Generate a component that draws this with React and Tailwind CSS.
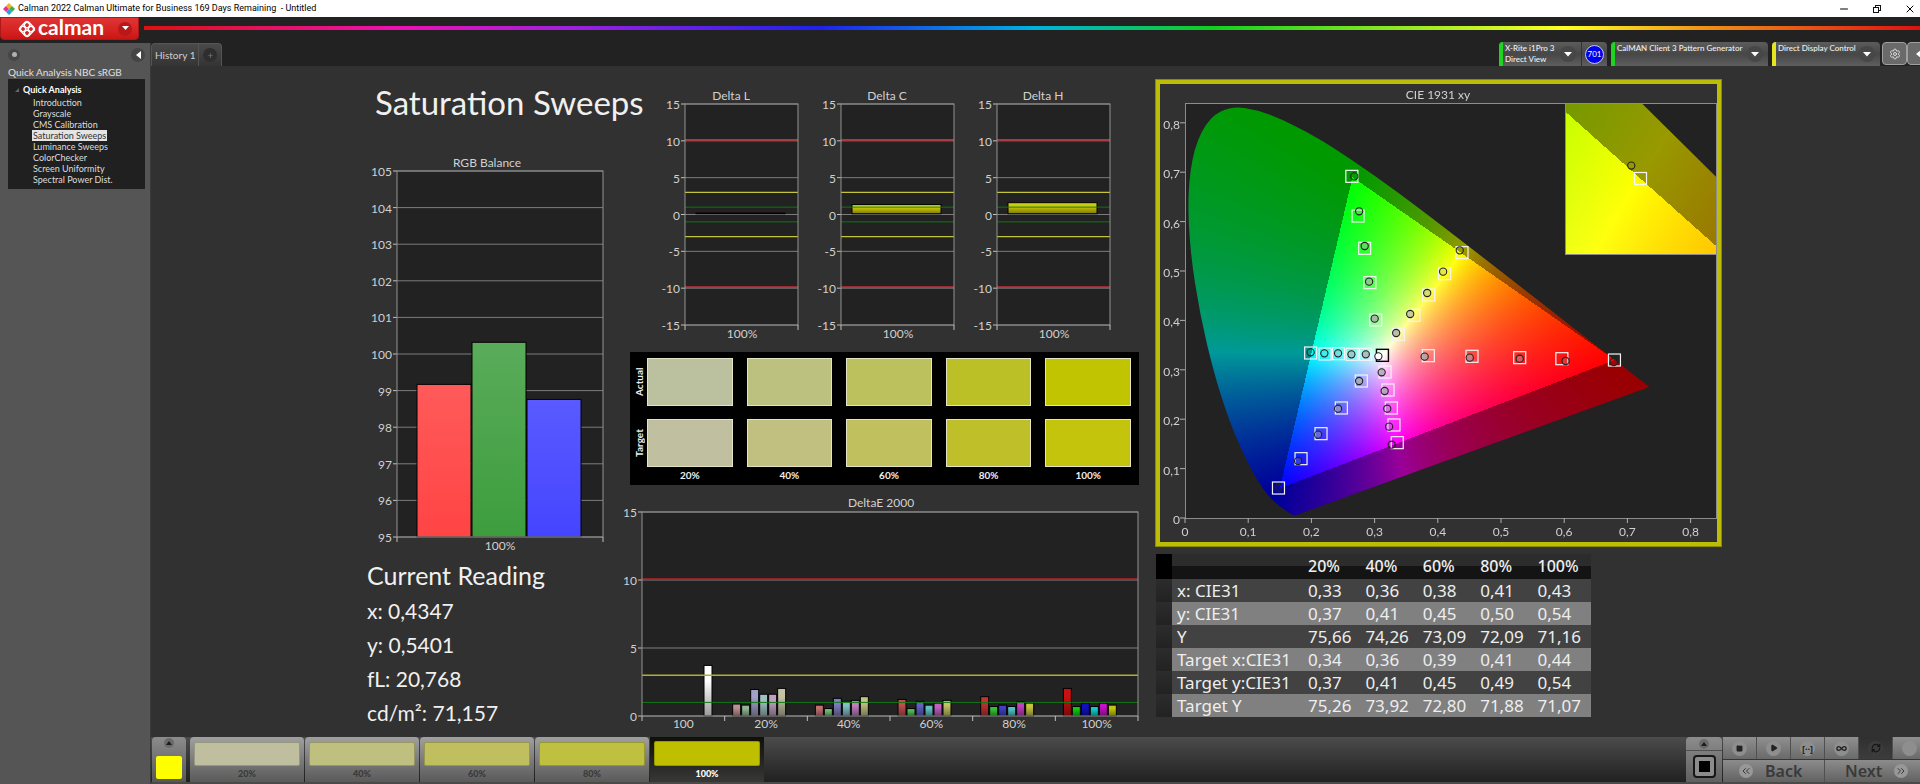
import React, { useEffect, useRef } from 'react';
import { Minus, Copy, X, Settings, Square, Play, RefreshCw, Infinity as InfinityIcon, ChevronsLeft, ChevronsRight } from 'lucide-react';

const steps = [
  { label: '20%', actual: 'bg-[#bbc19f]', target: 'bg-[#c0bf9f]', patch: 'bg-[#bfbf9f]' },
  { label: '40%', actual: 'bg-[#bcc180]', target: 'bg-[#c1c080]', patch: 'bg-[#bfbf80]' },
  { label: '60%', actual: 'bg-[#bdc15d]', target: 'bg-[#c1c05e]', patch: 'bg-[#bfbf60]' },
  { label: '80%', actual: 'bg-[#bcc027]', target: 'bg-[#bfbf29]', patch: 'bg-[#bfbf40]' },
  { label: '100%', actual: 'bg-[#c1c400]', target: 'bg-[#c4c40c]', patch: 'bg-[#bfbf00]' },
];

const workflow = [
  'Introduction',
  'Grayscale',
  'CMS Calibration',
  'Saturation Sweeps',
  'Luminance Sweeps',
  'ColorChecker',
  'Screen Uniformity',
  'Spectral Power Dist.',
];

const tableRows = [
  ['x: CIE31', '0,33', '0,36', '0,38', '0,41', '0,43'],
  ['y: CIE31', '0,37', '0,41', '0,45', '0,50', '0,54'],
  ['Y', '75,66', '74,26', '73,09', '72,09', '71,16'],
  ['Target x:CIE31', '0,34', '0,36', '0,39', '0,41', '0,44'],
  ['Target y:CIE31', '0,37', '0,41', '0,45', '0,49', '0,54'],
  ['Target Y', '75,26', '73,92', '72,80', '71,88', '71,07'],
];

const deltaE = [
  { label: '100', bars: [[6, 3.72, '#ffffff']] },
  { label: '20%', bars: [[0, 0.88, '#c09090'], [1, 0.8, '#90b890'], [2, 1.95, '#a0a0c8'], [3, 1.6, '#a0c0c0'], [4, 1.6, '#c0a0c0'], [5, 2.03, '#c4c4a4']] },
  { label: '40%', bars: [[0, 0.8, '#c07070'], [1, 0.55, '#70b870'], [2, 1.3, '#8080c0'], [3, 1.08, '#80c0c0'], [4, 1.15, '#c080c0'], [5, 1.42, '#c4c484']] },
  { label: '60%', bars: [[0, 1.22, '#c05050'], [1, 0.55, '#50b850'], [2, 1.08, '#6060c0'], [3, 0.8, '#60c0c0'], [4, 0.95, '#c060c0'], [5, 1.15, '#c4c464']] },
  { label: '80%', bars: [[0, 1.42, '#c03434'], [1, 0.7, '#34c034'], [2, 0.8, '#4040c0'], [3, 0.7, '#50c0c0'], [4, 1.05, '#c040c0'], [5, 0.95, '#c4c440']] },
  { label: '100%', bars: [[0, 2.03, '#c81010'], [1, 0.7, '#10c810'], [2, 0.95, '#1010c0'], [3, 0.7, '#10c8c8'], [4, 0.95, '#c810c8'], [5, 0.8, '#c4c410']] },
];

// Spectral locus, CIE 1931 2 degree observer
const locus = [
  [0.1741, 0.005], [0.1714, 0.0051], [0.1644, 0.0109], [0.1566, 0.0177], [0.144, 0.0297], [0.1355, 0.0399],
  [0.1241, 0.0578], [0.1096, 0.0868], [0.0913, 0.1327], [0.0687, 0.2007], [0.0454, 0.295], [0.0235, 0.4127],
  [0.0082, 0.5384], [0.0039, 0.6548], [0.0139, 0.7502], [0.0389, 0.812], [0.0743, 0.8338], [0.1142, 0.8262],
  [0.1547, 0.8059], [0.1929, 0.7816], [0.2296, 0.7543], [0.3016, 0.6923], [0.3731, 0.6245], [0.4441, 0.5547],
  [0.5125, 0.4866], [0.5752, 0.4242], [0.627, 0.3725], [0.6658, 0.334], [0.6915, 0.3083], [0.719, 0.2809],
  [0.7347, 0.2653],
];

const targets = [
  [0.264, 0.6916], [0.2738, 0.6113], [0.2843, 0.5459], [0.2925, 0.4764], [0.3019, 0.4008],
  [0.4383, 0.5371], [0.4108, 0.4946], [0.3856, 0.4514], [0.3622, 0.4103], [0.3376, 0.3718],
  [0.1988, 0.334], [0.2217, 0.332], [0.2428, 0.3327], [0.2644, 0.3313], [0.2855, 0.3313],
  [0.6795, 0.3198], [0.5963, 0.3225], [0.5296, 0.3246], [0.4541, 0.3273], [0.385, 0.3286],
  [0.1479, 0.0607], [0.1836, 0.1201], [0.2152, 0.1707], [0.2474, 0.2227], [0.279, 0.2773],
  [0.3358, 0.1525], [0.3306, 0.1883], [0.3265, 0.2227], [0.3212, 0.2591], [0.3165, 0.2955],
];

const readings = [
  [0.2679, 0.6916], [0.2755, 0.6208], [0.2843, 0.5506], [0.2913, 0.4784], [0.3001, 0.4035],
  [0.4347, 0.5418], [0.4084, 0.4987], [0.3832, 0.4555], [0.3563, 0.413], [0.3341, 0.3745],
  [0.1988, 0.3354], [0.2205, 0.3333], [0.2422, 0.3333], [0.2633, 0.3313], [0.2861, 0.3313],
  [0.6783, 0.3158], [0.6022, 0.3178], [0.5296, 0.3225], [0.4506, 0.3246], [0.3792, 0.3266],
  [0.1479, 0.0607], [0.1789, 0.1154], [0.2106, 0.1687], [0.2422, 0.2213], [0.2755, 0.2773],
  [0.327, 0.1484], [0.3229, 0.1849], [0.32, 0.2213], [0.3159, 0.2571], [0.3112, 0.2949],
];

const primaries = [[0.68, 0.32], [0.265, 0.69], [0.15, 0.06]];
const white = [0.3127, 0.329];

const toXYZ = ([x, y]) => [x / y, 1, (1 - x - y) / y];

const invert = (m) => {
  const [[a, b, c], [d, e, f], [g, h, i]] = m;
  const det = a * (e * i - f * h) - b * (d * i - f * g) + c * (d * h - e * g);
  return [
    [(e * i - f * h) / det, (c * h - b * i) / det, (b * f - c * e) / det],
    [(f * g - d * i) / det, (a * i - c * g) / det, (c * d - a * f) / det],
    [(d * h - e * g) / det, (b * g - a * h) / det, (a * e - b * d) / det],
  ];
};

const apply = (m, v) => m.map((r) => r[0] * v[0] + r[1] * v[1] + r[2] * v[2]);

const cols = primaries.map(toXYZ);
const fromXYZ = invert([0, 1, 2].map((i) => cols.map((c) => c[i])));
const whiteGain = apply(fromXYZ, toXYZ(white));

// Brightest colour for a chromaticity, dimmed when it is out of gamut
const colorAt = (x, y) => {
  const rgb = apply(fromXYZ, toXYZ([x, Math.max(y, 0.001)])).map((v, i) => v / whiteGain[i]);
  const gain = Math.min(...rgb) < 0 ? 153 : 255;
  const max = Math.max(...rgb);
  return rgb.map((v) => (Math.max(v, 0) / max) * gain);
};

const VIEW = { w: 557, h: 458 };
const PLOT = { x: 25, y: 19, w: 531, h: 415 };
const INSET = { x: 405, y: 19, w: 151, h: 151, cx: 0.438, cy: 0.5358, scale: 3080 };

const px = (x) => PLOT.x + x * 632;
const py = (y) => PLOT.y + PLOT.h - y * 494;
const ix = (x) => INSET.x + INSET.w / 2 + (x - INSET.cx) * INSET.scale;
const iy = (y) => INSET.y + INSET.h / 2 - (y - INSET.cy) * INSET.scale;

const paint = (ctx, area, mapX, mapY, unX, unY) => {
  const layer = document.createElement('canvas');
  layer.width = area.w;
  layer.height = area.h;
  const lctx = layer.getContext('2d');
  const img = lctx.createImageData(area.w, area.h);
  for (let j = 0; j < area.h; j++) {
    for (let i = 0; i < area.w; i++) {
      const c = colorAt(unX(area.x + i + 0.5), unY(area.y + j + 0.5));
      const o = (j * area.w + i) * 4;
      img.data[o] = c[0];
      img.data[o + 1] = c[1];
      img.data[o + 2] = c[2];
      img.data[o + 3] = 255;
    }
  }
  lctx.putImageData(img, 0, 0);

  ctx.fillStyle = '#222222';
  ctx.fillRect(area.x, area.y, area.w, area.h);
  ctx.save();
  ctx.beginPath();
  ctx.rect(area.x, area.y, area.w, area.h);
  ctx.clip();
  // smooth the coarse wavelength steps by passing through the midpoints
  const pts = locus.map(([x, y]) => [mapX(x), mapY(y)]);
  ctx.beginPath();
  ctx.moveTo(...pts[0]);
  for (let k = 1; k < pts.length - 1; k++) {
    const mid = [(pts[k][0] + pts[k + 1][0]) / 2, (pts[k][1] + pts[k + 1][1]) / 2];
    ctx.quadraticCurveTo(pts[k][0], pts[k][1], mid[0], mid[1]);
  }
  ctx.lineTo(...pts[pts.length - 1]);
  ctx.closePath();
  ctx.clip();
  ctx.drawImage(layer, area.x, area.y);
  ctx.restore();
};

const CieChart = () => {
  const ref = useRef(null);

  useEffect(() => {
    const ctx = ref.current.getContext('2d');
    ctx.clearRect(0, 0, VIEW.w, VIEW.h);
    paint(ctx, PLOT, px, py, (v) => (v - PLOT.x) / 632, (v) => (PLOT.y + PLOT.h - v) / 494);
    paint(
      ctx, INSET, ix, iy,
      (v) => INSET.cx + (v - INSET.x - INSET.w / 2) / INSET.scale,
      (v) => INSET.cy - (v - INSET.y - INSET.h / 2) / INSET.scale,
    );
  }, []);

  const ticks = [0, 1, 2, 3, 4, 5, 6, 7, 8];
  const name = (t) => (t === 0 ? '0' : `0,${t}`);

  return (
    <div className="relative border-5 border-[#bdbd08] outline-1 -outline-offset-1 outline-[#8a8a00]">
      <canvas ref={ref} width={VIEW.w} height={VIEW.h} className="block w-full" />
      <svg viewBox={`0 0 ${VIEW.w} ${VIEW.h}`} className="absolute inset-0 w-full font-[Lato,sans-serif] text-[12px]">
        <text x="278" y="15" textAnchor="middle" className="fill-[#d0d0d0]">CIE 1931 xy</text>
        <rect x={PLOT.x} y={PLOT.y} width={PLOT.w} height={PLOT.h} fill="none" stroke="#8c8c8c" shapeRendering="crispEdges" />
        {ticks.map((t) => (
          <g key={t} className="fill-[#d0d0d0]">
            <path d={`M${px(t / 10)} 434v5M20 ${py(t / 10)}h5`} stroke="#b0b0b0" />
            <text x={px(t / 10)} y="452" textAnchor="middle">{name(t)}</text>
            <text x="20" y={py(t / 10) + 6} textAnchor="end">{name(t)}</text>
          </g>
        ))}
        {targets.map(([x, y]) => (
          <rect key={`${x}-${y}`} x={px(x) - 6} y={py(y) - 6} width="12" height="12" fill="none" stroke="#f4f4f4" strokeWidth="1.2" />
        ))}
        <rect x={px(0.3124) - 6} y={py(0.3293) - 6} width="12" height="12" fill="none" stroke="#000" strokeWidth="1.4" />
        {readings.map(([x, y], i) => (
          <circle key={`${x}-${y}`} cx={px(x)} cy={py(y)} r="3.6" fill="#aaaaaa" fillOpacity={(i % 5) * 0.18 + 0.05} stroke="#222" strokeWidth="1.1" />
        ))}
        <circle cx={px(0.306)} cy={py(0.3273)} r="3.6" fill="#fff" stroke="#222" strokeWidth="1.1" />
        <rect x={INSET.x} y={INSET.y} width={INSET.w} height={INSET.h} fill="none" stroke="#8c8c8c" shapeRendering="crispEdges" />
        <rect x={ix(0.438) - 6} y={iy(0.5358) - 6} width="12" height="12" fill="none" stroke="#f4f4f4" strokeWidth="1.2" />
        <circle cx={ix(0.435)} cy={iy(0.54)} r="3.6" fill="none" stroke="#222" strokeWidth="1.1" />
      </svg>
    </div>
  );
};

// Frame, grid and value axis shared by the bar charts
const Axes = ({ plot, min, max, step, children }) => {
  const at = (v) => plot.y + ((max - v) / (max - min)) * plot.h;
  const values = [];
  for (let v = min; v <= max; v += step) values.push(v);
  return (
    <>
      <rect x={plot.x} y={plot.y} width={plot.w} height={plot.h} fill="#222222" />
      {values.map((v) => (
        <g key={v}>
          <path d={`M${plot.x - 4} ${at(v)}H${plot.x}`} stroke="#c0c0c0" />
          <path d={`M${plot.x} ${at(v)}h${plot.w}`} stroke="#7c7c7c" />
          <text x={plot.x - 5} y={at(v) + 5} textAnchor="end" className="fill-[#d0d0d0]">{v}</text>
        </g>
      ))}
      {children(at)}
      <rect x={plot.x} y={plot.y} width={plot.w} height={plot.h} fill="none" stroke="#929292" />
    </>
  );
};

const RgbBalance = () => {
  const plot = { x: 30, y: 19, w: 206, h: 366 };
  const bars = [
    { id: 'r', value: 99.17, from: '#ff5a5a', to: '#ff4444' },
    { id: 'g', value: 100.32, from: '#5aac5a', to: '#3d9d3d' },
    { id: 'b', value: 98.76, from: '#5a5aff', to: '#4545ff' },
  ];
  return (
    <svg viewBox="0 0 241 408" className="block w-full font-[Lato,sans-serif] text-[12px]">
      <defs>
        {bars.map((b) => (
          <linearGradient key={b.id} id={`bal-${b.id}`} x1="0" y1="0" x2="0" y2="1">
            <stop offset="0" stopColor={b.from} />
            <stop offset="1" stopColor={b.to} />
          </linearGradient>
        ))}
      </defs>
      <text x="120" y="15" textAnchor="middle" className="fill-[#d0d0d0]">RGB Balance</text>
      <Axes plot={plot} min={95} max={105} step={1}>
        {(at) => bars.map((b, i) => (
          <rect key={b.id} x={50 + i * 55} y={at(b.value)} width="54" height={at(95) - at(b.value)} fill={`url(#bal-${b.id})`} stroke="#000" />
        ))}
      </Axes>
      <path d="M30 385v5M236 385v5" stroke="#c0c0c0" />
      <text x="133" y="398" textAnchor="middle" className="fill-[#d0d0d0]">100%</text>
    </svg>
  );
};

const DeltaChart = ({ title, value }) => {
  const plot = { x: 25, y: 16, w: 113, h: 221 };
  return (
    <svg viewBox="0 0 156 260" className="block w-full min-w-0 flex-1 font-[Lato,sans-serif] text-[12px]">
      <defs>
        <linearGradient id="delta-bar" x1="0" y1="0" x2="0" y2="1">
          <stop offset="0" stopColor="#d8d820" />
          <stop offset="0.4" stopColor="#bfbf08" />
          <stop offset="1" stopColor="#7c7c08" />
        </linearGradient>
      </defs>
      <text x="71" y="12" textAnchor="middle" className="fill-[#d0d0d0]">{title}</text>
      <Axes plot={plot} min={-15} max={15} step={5}>
        {(at) => (
          <>
            <rect x="36" y={at(value)} width="89" height={at(0.1) - at(value)} fill="url(#delta-bar)" stroke="#000" />
            {[10, -10].map((v) => <path key={v} d={`M25 ${at(v) - 1}h113`} stroke="#c03038" strokeWidth="1.6" />)}
            {[3, -3].map((v) => <path key={v} d={`M25 ${at(v)}h113`} stroke="#c4c43c" strokeWidth="1.4" />)}
            {[1, -1].map((v) => <path key={v} d={`M25 ${at(v)}h113`} stroke="#0c8010" strokeOpacity="0.9" />)}
          </>
        )}
      </Axes>
      <path d="M25 237v5M138 237v5" stroke="#c0c0c0" />
      <text x="82" y="250" textAnchor="middle" className="fill-[#d0d0d0]">100%</text>
    </svg>
  );
};

const DeltaEChart = () => {
  const plot = { x: 18, y: 17, w: 496, h: 204 };
  const span = plot.w / deltaE.length;
  return (
    <svg viewBox="0 0 515 236" className="mt-[10px] block w-full overflow-visible font-[Lato,sans-serif] text-[12px]">
      <defs>
        <linearGradient id="shade" x1="0" y1="0" x2="0" y2="1">
          <stop offset="0.3" stopColor="#000" stopOpacity="0" />
          <stop offset="1" stopColor="#000" stopOpacity="0.4" />
        </linearGradient>
      </defs>
      <text x="257" y="12" textAnchor="middle" className="fill-[#d0d0d0]">DeltaE 2000</text>
      <Axes plot={plot} min={0} max={15} step={5}>
        {(at) => (
          <>
            {deltaE.map((g, i) => g.bars.map(([slot, v, color]) => {
              const box = { x: plot.x + i * span + 8 + slot * 9, y: at(v), width: 8, height: at(0) - at(v) };
              return (
                <g key={`${g.label}-${slot}`}>
                  <rect {...box} fill={color} stroke="#000" />
                  <rect {...box} fill="url(#shade)" />
                </g>
              );
            }))}
            <path d={`M18 ${at(10) - 1}h496`} stroke="#b82028" strokeWidth="1.6" />
            <path d={`M18 ${at(3)}h496`} stroke="#b0b030" strokeWidth="1.6" />
            <path d={`M18 ${at(1)}h496`} stroke="#107a14" />
          </>
        )}
      </Axes>
      {deltaE.map((g, i) => (
        <g key={g.label}>
          <path d={`M${plot.x + i * span} 221v5`} stroke="#c0c0c0" />
          <text x={plot.x + (i + 0.5) * span} y="233" textAnchor="middle" className="fill-[#d0d0d0]">{g.label}</text>
        </g>
      ))}
      <path d="M514 221v5" stroke="#c0c0c0" />
    </svg>
  );
};

const swatchRows = [
  { label: 'Actual', key: 'actual' },
  { label: 'Target', key: 'target' },
];

const Swatches = () => (
  <div className="ml-[6px] mt-1 flex flex-col bg-black pr-2 pt-[6px] font-[Lato,sans-serif] text-[#eeeeee]">
    <div className="flex flex-col gap-[13px]">
      {swatchRows.map((row) => (
        <div key={row.key} className="flex h-12">
          <div className="flex w-[17px] rotate-180 items-center justify-center text-[10px] font-bold leading-[14px] [writing-mode:vertical-rl]">
            {row.label}
          </div>
          <div className="grid flex-1 grid-cols-5 gap-[14px]">
            {steps.map((s) => (
              <div key={s.label} className={`border border-[#e4e4c4] ${s[row.key]}`} />
            ))}
          </div>
        </div>
      ))}
    </div>
    <div className="grid h-[18px] grid-cols-5 gap-[14px] pl-[17px] text-center text-[10px] font-bold leading-4">
      {steps.map((s) => <span key={s.label}>{s.label}</span>)}
    </div>
  </div>
);

const Chevron = () => (
  <span className="flex size-4 shrink-0 items-center justify-center rounded-full bg-[#474747]">
    <svg viewBox="0 0 8 5" className="w-2"><path d="M0 0h8L4 4.5z" fill="#fff" /></svg>
  </span>
);

const Device = ({ strip, width, lines, children }) => (
  <div className={`flex h-6 shrink-0 overflow-hidden rounded-t-sm bg-linear-to-b from-[#5c5c5c] via-[#474747] to-[#5e5e5e] ${width}`}>
    <span className={`w-1 shrink-0 ${strip}`} />
    <button type="button" className="flex flex-1 items-center pl-[2px] pr-[5px] text-left text-[8px] font-medium leading-[11px] text-[#f0f0f0]">
      <span className="h-[22px] flex-1 whitespace-pre">{lines}</span>
      <Chevron />
    </button>
    {children}
  </div>
);

const readout = ['x: 0,4347', 'y: 0,5401', 'fL: 20,768', 'cd/m²: 71,157'];

const Logo = () => (
  <svg viewBox="0 0 18 18" className="size-[18px]" fill="none" stroke="#fff" strokeWidth="1.4">
    <g transform="rotate(45 9 9)">
      <rect x="3" y="3" width="12" height="12" rx="2.6" />
      <circle cx="6.2" cy="6.2" r="2.6" />
      <circle cx="11.8" cy="6.2" r="2.6" />
      <circle cx="6.2" cy="11.8" r="2.6" />
      <circle cx="11.8" cy="11.8" r="2.6" />
    </g>
  </svg>
);

const TitleBar = () => (
  <header className="flex h-[17px] items-center bg-white pl-[3px] font-[Roboto,sans-serif] text-[9px] text-black">
    <svg viewBox="0 0 12 12" className="size-3">
      <path d="M6 0l3 3-3 3-3-3z" fill="#f2b020" />
      <path d="M9 3l3 3-3 3-3-3z" fill="#38b048" />
      <path d="M3 3l3 3-3 3-3-3z" fill="#e8308c" />
      <path d="M6 6l3 3-3 3-3-3z" fill="#28a0d8" />
    </svg>
    <h1 className="ml-[3px] whitespace-pre">Calman 2022 Calman Ultimate for Business 169 Days Remaining  - Untitled</h1>
    <div className="ml-auto flex items-center gap-[22px] pr-1">
      <button type="button" aria-label="Minimize"><Minus size={12} strokeWidth={2} /></button>
      <button type="button" aria-label="Restore">
        <svg viewBox="0 0 10 10" className="size-[10px]" fill="none" stroke="#111" shapeRendering="crispEdges">
          <path d="M1.5 3.5h5v5h-5zM3.5 3V1.5h5v5H7" />
        </svg>
      </button>
      <button type="button" aria-label="Close"><X size={12} strokeWidth={2} /></button>
    </div>
  </header>
);

const Sidebar = () => (
  <aside className="w-[151px] shrink-0 border-r border-[#3a3a3a] bg-[#555555] pl-2 pr-[5px] font-[Lato,sans-serif]">
    <div className="flex h-[23px] items-center justify-between">
      <button type="button" aria-label="Record" className="flex size-3 items-center justify-center rounded-full bg-[#464646]">
        <span className="size-[5px] rounded-full bg-[#b0b0b0]" />
      </button>
      <button type="button" aria-label="Collapse" className="flex size-[14px] items-center justify-center rounded-full bg-[#454545]">
        <svg viewBox="0 0 5 8" className="h-2"><path d="M5 0v8L0 4z" fill="#fff" /></svg>
      </button>
    </div>
    <h2 className="h-[13px] whitespace-nowrap text-[10px] leading-[13px] text-[#e0e0e0]">Quick Analysis NBC sRGB</h2>
    <nav className="bg-[#202020] pb-1 pt-[5px] text-[9px] leading-[11px] text-[#dcdcdc]">
      <p className="flex items-center gap-[4px] pb-[1px] pl-[7px] font-bold leading-[12px] text-white">
        <svg viewBox="0 0 4 4" className="size-1"><path d="M4 0v4H0z" fill="#666" /></svg>
        Quick Analysis
      </p>
      <ul>
        {workflow.map((w) => (
          <li key={w} className="pl-6">
            <a href="#step" className={w === 'Saturation Sweeps' ? 'block w-fit bg-[#e4e4e4] px-[1px] text-[#333333]' : 'block px-[1px]'}>{w}</a>
          </li>
        ))}
      </ul>
    </nav>
  </aside>
);

const TabStrip = () => (
  <div className="flex h-[23px] items-end bg-[#222222] font-[Lato,sans-serif]">
    <div className="flex h-[23px] rounded-t border border-b-0 border-[#555555] bg-linear-to-b from-[#4a4a4a] to-[#343434]">
      <button type="button" className="border-r border-[#555555] px-[3px] text-[10px] text-[#d0d0d0]">History 1</button>
      <button type="button" aria-label="Add history" className="flex w-[22px] items-center justify-center text-[10px] leading-none text-[#777777]">
        <span className="flex size-[14px] items-center justify-center rounded-full bg-[#2e2e2e]">+</span>
      </button>
    </div>
    <div className="ml-auto flex w-[421px] shrink-0 overflow-hidden">
      <Device width="w-[108px]" strip="bg-[#1ed41e]" lines={'X-Rite i1Pro 3\nDirect View'}>
        <div className="flex w-[26px] shrink-0 items-center justify-center border-l border-[#333333]">
          <span className="flex size-[19px] items-center justify-center rounded-full border border-[#c8c8e8] bg-[#0000f0] text-[8px] text-white">701</span>
        </div>
      </Device>
      <div className="ml-1"><Device width="w-[157px]" strip="bg-[#1ed41e]" lines="CalMAN Client 3 Pattern Generator" /></div>
      <div className="ml-1"><Device width="w-[108px]" strip="bg-[#e4e420]" lines="Direct Display Control" /></div>
      <button type="button" aria-label="Settings" className="ml-[2px] flex h-[23px] w-[25px] shrink-0 items-center justify-center rounded border border-[#a0a0a0] bg-[#6a6a6a] text-[#dddddd]">
        <Settings size={12} />
      </button>
      <button type="button" aria-label="Previous" className="flex h-[23px] w-[25px] shrink-0 items-center rounded border border-[#a0a0a0] bg-[#6a6a6a] pl-2">
        <svg viewBox="0 0 5 8" className="h-2"><path d="M5 0v8L0 4z" fill="#fff" /></svg>
      </button>
    </div>
  </div>
);

const DataTable = () => (
  <table className="ml-[1px] mt-[7px] w-[435px] max-w-full table-fixed font-['Noto_Sans',sans-serif] text-[17px] text-[#eeeeee]">
    <colgroup>
      <col className="w-4" />
      <col className="w-[132px]" />
    </colgroup>
    <thead>
      <tr className="h-[25px] bg-linear-to-b from-[#2c2c2c] from-50% to-[#141414] to-50% text-left text-[16px] leading-[25px]">
        <th className="bg-black" />
        <th />
        {steps.map((s) => <th key={s.label} className="pl-1 font-medium">{s.label}</th>)}
      </tr>
    </thead>
    <tbody>
      {tableRows.map((row, i) => (
        <tr key={row[0]} className={i % 2 ? 'h-[23px] bg-[#808080] leading-[23px]' : 'h-[23px] bg-[#424242] leading-[23px]'}>
          <td className="bg-linear-to-b from-[#2c2c2c] to-[#222222]" />
          <th className="whitespace-nowrap pl-[5px] text-left font-normal">{row[0]}</th>
          {row.slice(1).map((v, j) => <td key={j} className="pl-1">{v}</td>)}
        </tr>
      ))}
    </tbody>
  </table>
);

const transport = [
  { name: 'Stop', icon: <Square size={7} fill="#222" /> },
  { name: 'Play', icon: <Play size={8} fill="#222" /> },
  { name: 'Read series', icon: <span className="text-[9px] font-bold leading-none">[··]</span> },
  { name: 'Continuous', icon: <InfinityIcon size={11} strokeWidth={3} /> },
  { name: 'Refresh', icon: <RefreshCw size={10} strokeWidth={3} />, dark: true },
  { name: 'More', icon: null },
];

const UpArrow = () => (
  <span className="flex size-[10px] items-center justify-center rounded-full bg-[#6a6a6a]">
    <svg viewBox="0 0 6 4" className="w-[6px]"><path d="M0 4h6L3 0z" fill="#1c1c1c" /></svg>
  </span>
);

const Footer = () => (
  <footer className="flex h-[47px] overflow-hidden border-b-2 border-[#4a4a46] bg-linear-to-b from-[#4c4c4c] to-[#212121] pl-[1px]">
    <div className="flex w-[34px] shrink-0 flex-col items-center justify-between rounded-t bg-linear-to-b from-[#8c8c8c] to-[#585858] pb-[3px] pt-[1px]">
      <button type="button" aria-label="Expand patches"><UpArrow /></button>
      <span className="h-[23px] w-[26px] rounded-xs bg-[#ffff00]" />
    </div>
    <div className="ml-1 flex min-w-0 gap-[1px] font-[Lato,sans-serif]">
      {steps.map((s, i) => (
        <button
          key={s.label}
          type="button"
          className={i === 4
            ? 'flex w-[114px] flex-col items-center bg-linear-to-b from-[#101008] to-[#383838] pt-1 text-[9px] font-black text-white'
            : 'flex w-[114px] flex-col items-center rounded-t bg-linear-to-b from-[#a0a0a0] to-[#5a5a5a] pt-[5px] text-[9px] font-black text-[#3a3a3a]'}
        >
          <span className={`w-[106px] rounded-xs border border-black/20 ${i === 4 ? 'h-7' : 'h-[27px]'} ${s.patch}`} />
          <span className="leading-4">{s.label}</span>
        </button>
      ))}
    </div>
    <div className="ml-auto flex w-[234px] shrink-0 overflow-hidden">
      <div className="flex w-9 shrink-0 flex-col items-center rounded-t bg-linear-to-b from-[#8c8c8c] to-[#606060]">
        <button type="button" aria-label="Expand controls" className="flex h-[14px] w-full items-center justify-center border-b border-[#505050]"><UpArrow /></button>
        <button type="button" aria-label="Pattern window" className="mt-1 flex size-[23px] items-center justify-center rounded-sm border-2 border-[#161616] bg-[#8c8c8c]">
          <span className="size-[11px] bg-black" />
        </button>
      </div>
      <div className="ml-[1px] w-[204px] shrink-0">
        <div className="flex h-[22px]">
          {transport.map((t) => (
            <button
              key={t.name}
              type="button"
              aria-label={t.name}
              className={t.dark
                ? 'flex w-[34px] items-center justify-center border-r border-[#505050] bg-linear-to-b from-[#303030] to-[#3c3c3c] text-[#161616]'
                : 'flex w-[34px] items-center justify-center border-r border-[#505050] bg-linear-to-b from-[#909090] to-[#6a6a6a] text-[#222222]'}
            >
              <span className={`flex size-[15px] items-center justify-center rounded-full ${t.dark ? 'bg-[#3c3c3c]' : 'bg-[#8e8e8e]'}`}>{t.icon}</span>
            </button>
          ))}
        </div>
        <div className="mt-[1px] flex h-[22px] font-['Noto_Sans',sans-serif] text-[16px] font-semibold leading-none text-[#3a3a3a]">
          <button type="button" className="flex w-[102px] items-center gap-3 border-r border-[#505050] bg-linear-to-b from-[#8c8c8c] to-[#626262] pl-4">
            <span className="flex size-[14px] items-center justify-center rounded-full bg-[#989898]"><ChevronsLeft size={12} /></span>
            Back
          </button>
          <button type="button" className="flex w-[102px] items-center gap-3 bg-linear-to-b from-[#8c8c8c] to-[#626262] pl-5">
            Next
            <span className="flex size-[14px] items-center justify-center rounded-full bg-[#989898]"><ChevronsRight size={12} /></span>
          </button>
        </div>
      </div>
    </div>
  </footer>
);

const App = () => (
  <div className="flex min-h-screen flex-col bg-[#222222]">
    <TitleBar />
    <div className="flex h-[26px] items-start gap-[5px]">
      <button type="button" className="flex h-[23px] w-[139px] shrink-0 items-center rounded-b-sm border border-[#b01818] bg-linear-to-b from-[#e03434] to-[#cc1414] pl-[17px] font-[Lato,sans-serif] text-[21px] font-bold leading-none text-white">
        <Logo />
        <span className="ml-[2px] flex h-[23px] items-center pb-1">calman</span>
        <span className="ml-auto mr-[6px] flex size-[14px] items-center justify-center rounded-full bg-[#b81818]">
          <svg viewBox="0 0 8 5" className="w-[7px]"><path d="M0 0h8L4 4.5z" fill="#fff" /></svg>
        </span>
      </button>
      <div className="mt-[9px] h-1 flex-1 bg-[linear-gradient(to_right,#e01010_0%,#f010b0_14%,#a020e0_24%,#2020f0_38%,#00b0e0_50%,#10d020_60%,#ffff20_80%,#f09018_88%,#e01010_100%)]" />
    </div>
    <div className="flex flex-1">
      <Sidebar />
      <div className="flex min-w-0 flex-1 flex-col">
        <TabStrip />
        <main className="flex-1 bg-[#313131] pl-[18px]">
          <div className="mx-auto grid w-full max-w-[1355px] grid-cols-[minmax(0,241fr)_minmax(0,515fr)_minmax(0,567fr)] items-start gap-x-4">
            <section className="pt-4 font-[Lato,sans-serif] text-[#f0f0f0]">
              <h2 className="mb-[30px] whitespace-nowrap pl-2 text-[33px] leading-10">Saturation Sweeps</h2>
              <RgbBalance />
              <h3 className="text-[25px] leading-[30px]">Current Reading</h3>
              <div className="mt-1 text-[21px] leading-[34px]">
                {readout.map((r) => <p key={r}>{r}</p>)}
              </div>
            </section>
            <section className="pt-[22px]">
              <div className="flex pl-9 pr-[11px]">
                <DeltaChart title="Delta L" value={0.2} />
                <DeltaChart title="Delta C" value={1.35} />
                <DeltaChart title="Delta H" value={1.6} />
              </div>
              <Swatches />
              <DeltaEChart />
            </section>
            <section className="pt-[13px]">
              <CieChart />
              <DataTable />
            </section>
          </div>
        </main>
        <Footer />
      </div>
    </div>
  </div>
);

export default App;
